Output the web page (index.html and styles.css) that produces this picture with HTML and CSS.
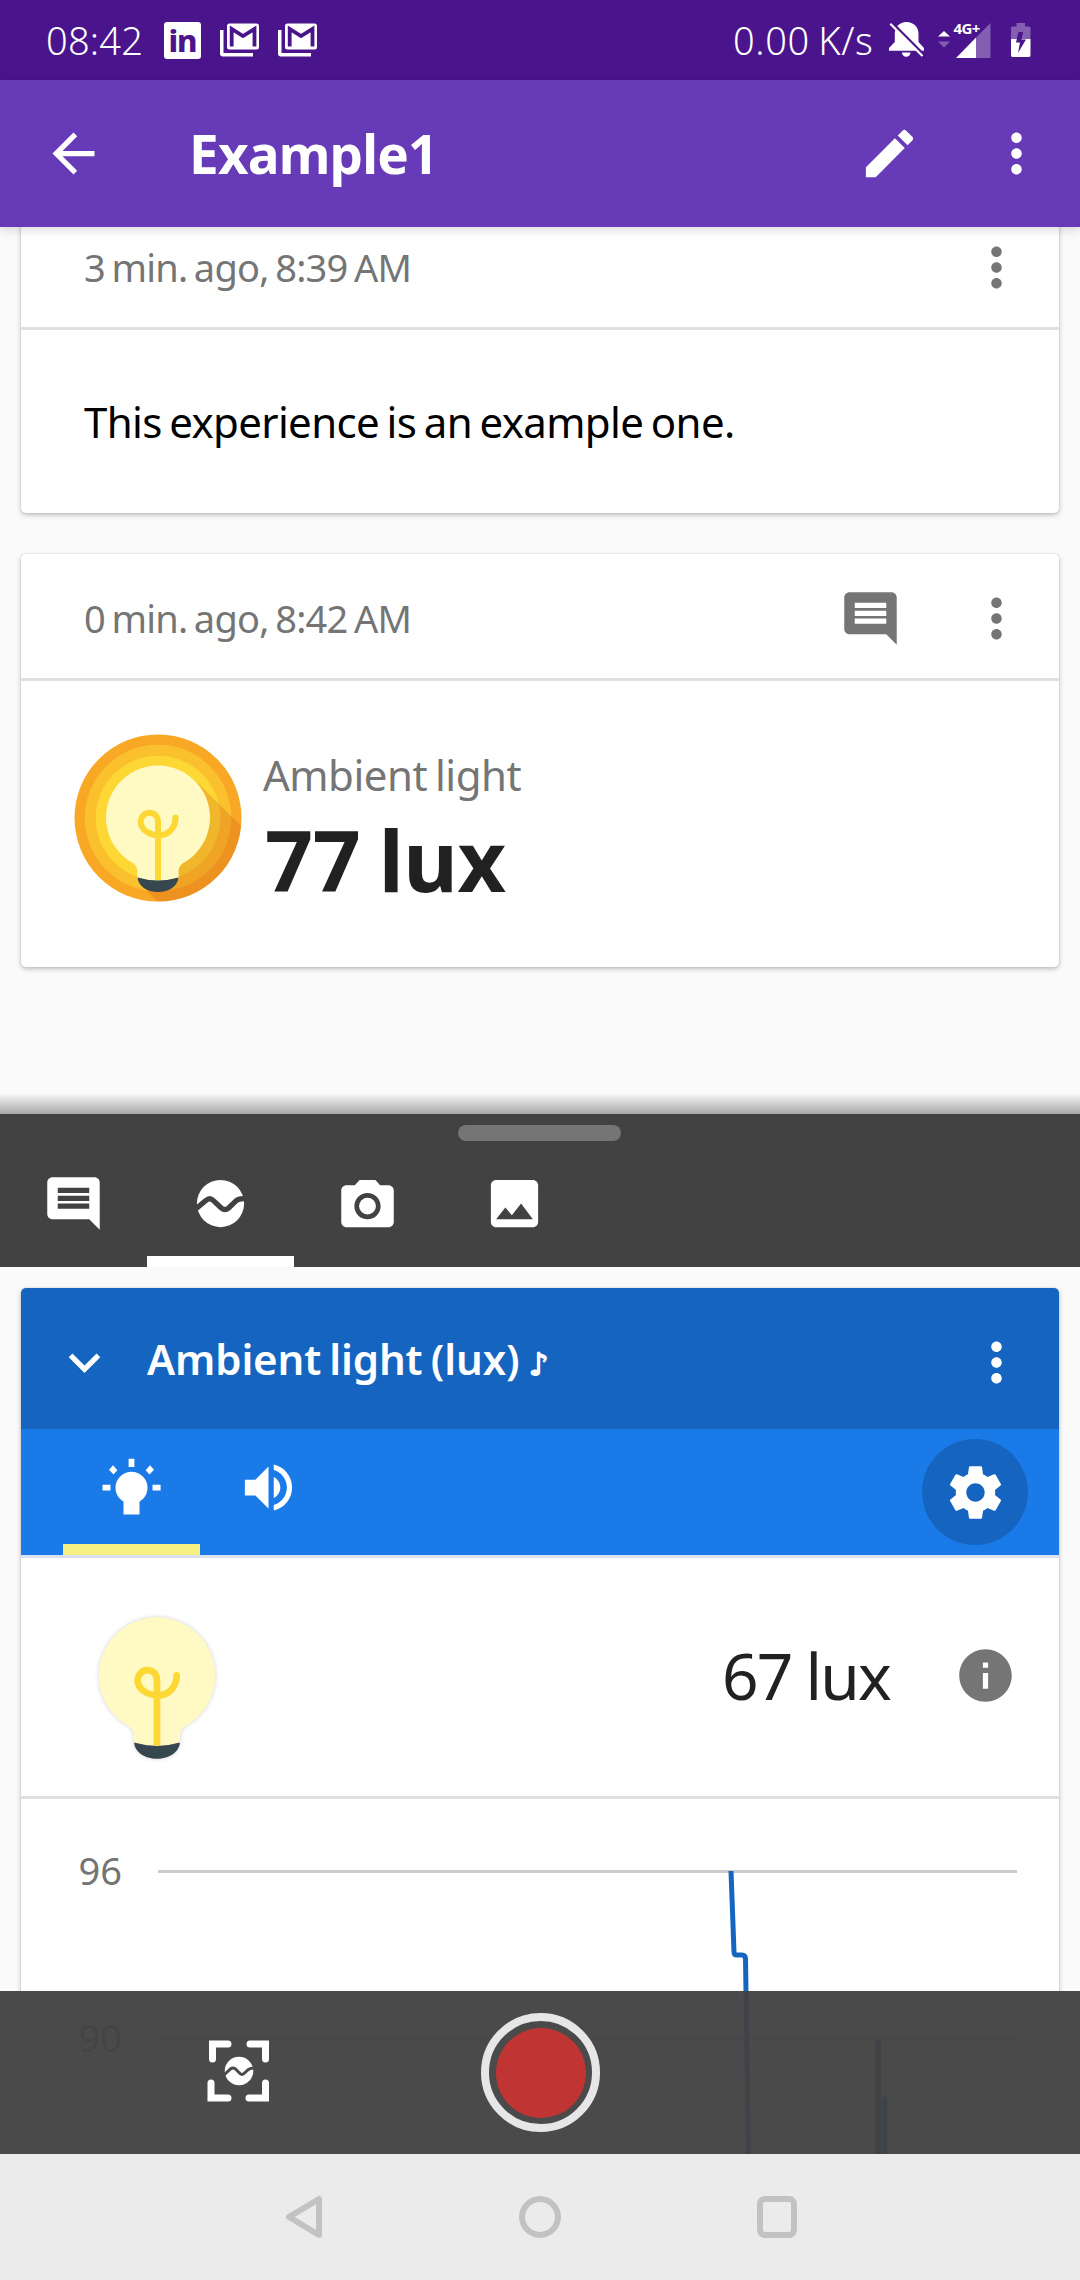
FILE: index.html
```html
<!DOCTYPE html>
<html lang="en">
<head>
<meta charset="utf-8">
<title>Example1</title>
<link rel="stylesheet" href="styles.css">
</head>
<body>
<svg class="defs" width="0" height="0" aria-hidden="true">
  <defs>
    <symbol id="more" viewBox="0 0 24 24"><path d="M12 8c1.1 0 2-.9 2-2s-.9-2-2-2-2 .9-2 2 .9 2 2 2zm0 2c-1.1 0-2 .9-2 2s.9 2 2 2 2-.9 2-2-.9-2-2-2zm0 6c-1.1 0-2 .9-2 2s.9 2 2 2 2-.9 2-2-.9-2-2-2z"/></symbol>
    <symbol id="comment" viewBox="0 0 24 24"><path d="M21.99 4c0-1.1-.89-2-1.99-2H4c-1.1 0-2 .9-2 2v12c0 1.1.9 2 2 2h14l4 4-.01-18zM18 14H6v-2h12v2zm0-3H6V9h12v2zm0-3H6V6h12v2z"/></symbol>
    <symbol id="mail-stack" viewBox="0 0 39 34">
      <path d="M9.500 .5H36.500Q39 .5 39 3V24Q39 26.500 36.500 26.500H9.500Q7 26.500 7 24V3Q7 .5 9.500 .5zM0 7H3.500V30H33V33.500H3Q0 33.500 0 30.500z"/>
      <path class="cut" d="M11.700 23.500V6L23 13L34.500 6V23.500"/>
    </symbol>
    <symbol id="bulb" viewBox="-84 -84 168 168">
      <path class="glass" d="M-20.600 60V54C-20.600 49 -23 46 -27 44A52 52 0 1 1 27 44C23 46 20.600 49 20.600 54V60Q0 66 -20.600 60z"/>
      <path class="filament" d="M0 62V4C0 -2 -4 -5.300 -8.700 -5.300C-13.500 -5.300 -17.300 -1 -17.300 4C-17.300 11 -9 17.300 1 17.300C11 17.300 17.500 9 17.500 0"/>
      <path class="filament-end" d="M17.500 0V-.5"/>
      <path class="base" d="M-20.400 59.500Q0 65.500 20.400 59.500C20 68 11 74 0 74C-11 74 -20 68 -20.400 59.500z"/>
    </symbol>
  </defs>
</svg>

<div class="screen">
  <header class="status">
    <span class="clock">08:42</span>
    <span class="linkedin">in</span>
    <svg class="mail"><use href="#mail-stack"/></svg>
    <svg class="mail"><use href="#mail-stack"/></svg>
    <span class="speed">0.00 K/s</span>
    <svg class="bell" viewBox="0 0 35 36">
      <path d="M17.500 0C10.500 0 5.800 5 5.800 11.500V20L0 26V28.700H35V26L29.500 20V11.500C29.500 5 24.500 0 17.500 0zM13 30.500H21.500A4.200 4.200 0 0 1 13 30.500z"/>
      <path class="slash-gap" d="M0 -2L37 35"/>
      <path class="slash" d="M1.300 1.800L33.500 34"/>
    </svg>
    <svg class="signal" viewBox="0 -8 53 52">
      <path d="M0 14.500L6 9L12 14.500z"/><path class="faint" d="M0 19.500L6 25.500L12 19.500z"/>
      <path class="faint" d="M38 15.500L52.500 1V36H38z"/><path d="M38 15.500V36H18z"/>
      <text x="15.500" y="12">4G+</text>
    </svg>
    <svg class="battery" viewBox="0 0 20 34">
      <path class="faint" d="M5.500 0H14V3.500H18Q19.500 3.500 19.500 5V16H0V5Q0 3.500 1.500 3.500H5.500z"/>
      <path d="M0 16H19.500V32Q19.500 34 18 34H1.500Q0 34 0 32z"/>
      <path class="bolt" d="M12 9H7.500L5 19.500H9L7 30L15 16.500H10.500z"/>
    </svg>
  </header>

  <nav class="appbar">
    <svg class="icon" viewBox="0 0 24 24"><path d="M20 11H7.830l5.590-5.590L12 4l-8 8 8 8 1.410-1.410L7.830 13H20v-2z"/></svg>
    <h1>Example1</h1>
    <svg class="icon" viewBox="0 0 24 24"><path d="M3 17.250V21h3.750L17.810 9.940l-3.750-3.750L3 17.250zM20.710 7.040c.39-.39.39-1.020 0-1.410l-2.340-2.340c-.39-.39-1.020-.39-1.410 0l-1.830 1.830 3.750 3.750 1.830-1.830z"/></svg>
    <svg class="icon menu"><use href="#more"/></svg>
  </nav>

  <main class="notes">
    <article class="card">
      <div class="card-head"><time>3 min. ago, 8:39 AM</time><svg class="icon"><use href="#more"/></svg></div>
      <p class="note-text">This experience is an example one.</p>
    </article>
    <article class="card">
      <div class="card-head"><time>0 min. ago, 8:42 AM</time><svg class="icon"><use href="#comment"/></svg><svg class="icon"><use href="#more"/></svg></div>
      <div class="snapshot">
        <svg class="badge" viewBox="-84 -84 168 168">
          <clipPath id="disc"><circle r="83.500"/></clipPath>
          <circle class="ring-outer" r="83.500"/><circle class="ring-mid" r="73.300"/><circle class="ring-inner" r="62.300"/>
          <path class="cast" clip-path="url(#disc)" d="M39 -36L90 15V90H6L-11 73L20 40z"/>
          <use href="#bulb" x="-84" y="-84" width="168" height="168"/>
        </svg>
        <div class="reading"><span class="label">Ambient light</span><strong>77 lux</strong></div>
      </div>
    </article>
  </main>

  <section class="panel">
    <div class="handle"></div>
    <div class="tabs">
      <div class="tab"><svg class="icon"><use href="#comment"/></svg></div>
      <div class="tab active"><svg class="icon" viewBox="0 0 24 24"><circle cx="12" cy="12" r="9"/><path class="wave" d="M2 14.600L6.400 10.900Q7.900 9.500 9.300 10.900L12.300 13.700Q13.700 14.900 15.100 13.700L17.800 11.100Q18.900 10 21.600 10.200"/></svg></div>
      <div class="tab"><svg class="icon" viewBox="0 -1 24 24"><circle cx="12" cy="12" r="3.200"/><path d="M9 2L7.170 4H4c-1.100 0-2 .9-2 2v12c0 1.100.9 2 2 2h16c1.100 0 2-.9 2-2V6c0-1.100-.9-2-2-2h-3.170L15 2H9zm3 15c-2.760 0-5-2.240-5-5s2.240-5 5-5 5 2.240 5 5-2.240 5-5 5z"/></svg></div>
      <div class="tab"><svg class="icon" viewBox="0 0 24 24"><path d="M21 19V5c0-1.100-.9-2-2-2H5c-1.100 0-2 .9-2 2v14c0 1.100.9 2 2 2h14c1.100 0 2-.9 2-2zM8.500 13.500l2.500 3.010L14.500 12l4.500 6H5l3.500-4.500z"/></svg></div>
    </div>
  </section>

  <section class="sensors">
    <article class="card sensor">
      <div class="sensor-head">
        <svg class="icon" viewBox="0 0 24 24"><path d="M16.590 8.590L12 13.170 7.410 8.590 6 10l6 6 6-6z"/></svg>
        <h2>Ambient light (lux) <span class="tone">♪</span></h2>
        <svg class="icon"><use href="#more"/></svg>
      </div>
      <div class="sensor-tabs">
        <div class="stab active">
          <svg class="icon" viewBox="0 0 63 63"><circle cx="31.500" cy="31.800" r="16"/><path d="M23.500 42H39.500V58.500H23.500zM28.600 2.800H34.400V11H28.600zM2.500 28.800H10.500V34.600H2.500zM52.500 28.800H60.600V34.600H52.500zM9 13.700L13 9.300L17.400 14.200L13.500 18.400zM54 13.700L50 9.300L45.600 14.200L49.500 18.400z"/></svg>
        </div>
        <div class="stab">
          <svg class="icon" viewBox="0 0 24 24"><path d="M3 9v6h4l5 5V4L7 9H3zm13.500 3c0-1.770-1.020-3.290-2.500-4.030v8.050c1.480-.73 2.500-2.250 2.500-4.020zM14 3.230v2.060c2.890.86 5 3.540 5 6.710s-2.110 5.850-5 6.710v2.060c4.010-.91 7-4.490 7-8.770s-2.990-7.860-7-8.770z"/></svg>
        </div>
        <div class="gear">
          <svg class="icon" viewBox="0 0 24 24"><path d="M19.430 12.980c.04-.32.07-.64.07-.98s-.03-.66-.07-.98l2.110-1.650c.19-.15.24-.42.12-.64l-2-3.460c-.12-.22-.39-.3-.61-.22l-2.490 1c-.52-.4-1.080-.73-1.690-.98l-.38-2.650C14.460 2.180 14.250 2 14 2h-4c-.25 0-.46.18-.49.42l-.38 2.650c-.61.25-1.170.59-1.690.98l-2.490-1c-.23-.09-.49 0-.61.22l-2 3.460c-.13.22-.07.49.12.64l2.110 1.650c-.04.32-.07.65-.07.98s.03.66.07.98l-2.110 1.650c-.19.15-.24.42-.12.64l2 3.460c.12.22.39.3.61.22l2.490-1c.52.4 1.080.73 1.690.98l.38 2.650c.03.24.24.42.49.42h4c.25 0 .46-.18.49-.42l.38-2.650c.61-.25 1.170-.59 1.690-.98l2.490 1c.23.09.49 0 .61-.22l2-3.460c.12-.22.07-.49-.12-.64l-2.110-1.650zM12 15.500c-1.930 0-3.500-1.570-3.500-3.500s1.570-3.500 3.500-3.500 3.500 1.570 3.500 3.500-1.570 3.500-3.500 3.500z"/></svg>
        </div>
      </div>
      <div class="live">
        <svg class="live-bulb"><use href="#bulb"/></svg>
        <span class="value">67 lux</span>
        <svg class="icon info" viewBox="0 0 24 24"><path d="M12 2C6.480 2 2 6.480 2 12s4.480 10 10 10 10-4.480 10-10S17.520 2 12 2zm1 15h-2v-6h2v6zm0-8h-2V7h2v2z"/></svg>
      </div>
      <svg class="chart" viewBox="0 0 1038 355">
        <path class="grid" d="M137 72.500H996M137 240H996"/>
        <text x="57.500" y="86">96</text><text x="57.500" y="253">90</text>
        <path class="line" d="M710 72L713 153Q713 156 716 156H721Q724.500 156 724.500 160L727.500 360"/>
        <path class="line peak" d="M857 360V244M863.500 360V300"/>
      </svg>
    </article>
    <div class="recorder">
      <svg class="snap" viewBox="0 0 64 63">
        <path class="corner" d="M5.500 19V4H21M43 4H58.500V19M4 43V58H21M42 58H58.500V43"/>
        <circle cx="32" cy="31" r="14.300"/>
        <path class="thin-wave" d="M17 35L23.500 29Q26 27 28.500 29L33 33.500Q35 35.500 37 33.500L41.500 29.500Q43.500 28 47.500 28"/>
      </svg>
      <div class="record"></div>
    </div>
  </section>

  <footer class="navbar">
    <svg viewBox="0 0 42 44"><path d="M37 4V40L7 22z"/></svg>
    <svg viewBox="0 0 42 44"><circle cx="21" cy="22" r="18"/></svg>
    <svg viewBox="0 0 42 44"><rect x="4" y="4" width="34" height="36" rx="5"/></svg>
  </footer>
</div>
</body>
</html>
```
FILE: styles.css
```css
* { box-sizing: border-box; }
body { margin: 0; font-family: "Noto Sans", "Open Sans", sans-serif; background: #fafafa; }
h1, h2, p { margin: 0; }
svg { display: block; flex: none; }
.defs { position: absolute; }
.screen { width: 1080px; height: 2280px; display: flex; flex-direction: column; overflow: hidden; background: #fafafa; }
.icon { width: 63px; height: 63px; fill: currentColor; }

/* status bar */
.status { flex: none; height: 80px; display: flex; align-items: center; padding: 0 49px 0 46px; background: #4a148c; color: #fff; fill: #fff; font-size: 38px; line-height: 78px; font-weight: 350; }
.clock { width: 118px; letter-spacing: .2px; padding-bottom: 1px; }
.linkedin { width: 37px; height: 37px; margin-right: 19px; border-radius: 3px; background: #fff; color: #4a148c; font-size: 31px; font-weight: 800; line-height: 36px; text-align: center; letter-spacing: -1px; }
.mail { width: 39px; height: 34px; margin-right: 19px; }
.cut { fill: none; stroke: #4a148c; stroke-width: 3.800; }
.speed { margin-left: auto; width: 157px; letter-spacing: .6px; word-spacing: -2px; white-space: nowrap; padding: 0 0 1px 1px; }
.bell { width: 35px; height: 36px; margin-right: 14px; }
.slash-gap { stroke: #4a148c; stroke-width: 3; }
.slash { stroke: #fff; stroke-width: 2.200; }
.signal { width: 53px; height: 52px; margin-right: 20px; }
.signal text { font-size: 15px; font-weight: 700; letter-spacing: -.6px; }
.battery { width: 20px; height: 34px; }
.faint { opacity: .32; }
.bolt { fill: #4a148c; }

/* app bar */
.appbar { flex: none; height: 147px; display: flex; align-items: center; padding: 0 32px 0 42px; background: #673ab7; color: #fff; position: relative; z-index: 1; box-shadow: 0 3px 10px rgba(0, 0, 0, .15); }
.appbar h1 { flex: 1; padding: 1px 0 0 84px; font-size: 53px; line-height: 80px; font-weight: 700; letter-spacing: -.8px; }
.appbar .menu { margin-left: 64px; }

/* note cards */
.notes { flex: none; height: 887px; padding: 0 21px; overflow: hidden; display: flex; flex-direction: column; gap: 41px; }
.card { flex: none; background: #fff; border-radius: 5px; box-shadow: 0 2px 5px rgba(0, 0, 0, .24), 0 0 2px rgba(0, 0, 0, .12); }
.notes .card:first-child { margin-top: -24px; }
.card-head { height: 127px; display: flex; align-items: center; gap: 63px; padding: 4px 31px 0 63px; border-bottom: 3px solid #e0e0e0; color: #757575; }
.card-head time { flex: 1; font-size: 38px; line-height: 60px; letter-spacing: -.75px; word-spacing: -2.700px; padding-bottom: 1px; }
.note-text { height: 183px; padding-left: 63px; font-size: 42px; line-height: 184px; color: #000; letter-spacing: -.65px; word-spacing: -2.700px; }
.snapshot { height: 286px; display: flex; align-items: flex-start; padding: 53px 0 0 53px; }
.badge { width: 168px; height: 168px; }
.ring-outer { fill: #f9a825; }
.ring-mid { fill: #fbc02d; }
.ring-inner { fill: #fdd835; }
.cast { fill: rgb(202, 80, 20); fill-opacity: .25; }
.glass { fill: #fff9c4; }
.filament { fill: none; stroke: #fdd835; stroke-width: 6; stroke-linecap: butt; }
.filament-end { stroke: #fdd835; stroke-width: 6; stroke-linecap: round; }
.base { fill: #37474f; }
.reading { display: flex; flex-direction: column; padding: 11px 0 0 21px; }
.label { font-size: 42px; line-height: 60px; color: #757575; letter-spacing: -.5px; word-spacing: -2.500px; }
.reading strong { font-size: 84px; line-height: 109px; font-weight: 700; color: #212121; letter-spacing: -.4px; word-spacing: -3px; padding-left: 2px; }

/* tool panel */
.panel { flex: none; height: 153px; background: #424242; color: #fff; position: relative; display: flex; flex-direction: column; align-items: flex-start; }
.panel::before { content: ""; position: absolute; left: 0; right: 0; bottom: 100%; height: 21px; background: linear-gradient(rgba(0, 0, 0, 0), rgba(0, 0, 0, .33)); }
.handle { align-self: center; flex: none; width: 163px; height: 16px; margin: 11px 1px 0 0; border-radius: 8px; background: #757575; }
.tabs { flex: 1; display: flex; }
.tab { width: 147px; display: flex; justify-content: center; align-items: flex-start; padding-top: 31px; border-bottom: 11px solid transparent; }
.tab.active { border-bottom-color: #fff; }
.wave { fill: none; stroke: #424242; stroke-width: 2; }

/* sensor card */
.sensors { flex: none; height: 887px; padding: 21px 21px 0; background: #fafafa; position: relative; overflow: hidden; }
.sensor { overflow: hidden; }
.sensor-head { height: 141px; display: flex; align-items: center; padding: 0 31px 0 32px; background: #1565c0; color: #fff; }
.sensor-head .icon { margin-top: 8px; }
.sensor-head h2 { flex: 1; padding-left: 31px; font-size: 42px; line-height: 60px; font-weight: 600; word-spacing: -2.500px; letter-spacing: -.15px; }
.tone { display: inline-block; font-family: "DejaVu Sans", sans-serif; font-size: 31px; line-height: 40px; -webkit-text-stroke: 1.500px #fff; margin-left: 1px; }
.sensor-tabs { height: 129px; display: flex; align-items: flex-start; padding: 0 31px 0 42px; background: #1a7ae8; color: #fff; border-bottom: 3px solid #d9e2ee; }
.stab { width: 137px; height: 126px; display: flex; justify-content: center; padding-top: 27px; border-bottom: 11px solid transparent; }
.stab.active { border-bottom-color: #f9f084; }
.gear { width: 106px; height: 106px; margin: 10px 0 0 auto; border-radius: 50%; background: #1565c0; display: flex; align-items: center; justify-content: center; }
.live { height: 241px; display: flex; align-items: center; padding: 0 42px; border-bottom: 3px solid #e0e0e0; }
.live-bulb { width: 188px; height: 188px; margin-bottom: 3px; filter: drop-shadow(0 0 2px rgba(0, 0, 0, .18)); }
.value { flex: 1; text-align: right; font-size: 64px; line-height: 90px; color: #212121; letter-spacing: -1.800px; word-spacing: -1px; padding: 0 64px 2px 0; }
.info { color: #757575; margin-bottom: 3px; }
.chart { width: 1038px; height: 355px; font-size: 38px; fill: #757575; }
.grid { stroke: #ccc; stroke-width: 3; }
.line { fill: none; stroke: #1565c0; stroke-width: 5; stroke-linejoin: round; }
.peak { stroke-width: 6; stroke-linecap: round; }

/* recording bar floats above the chart */
.recorder { position: absolute; left: 0; right: 0; bottom: 0; height: 163px; background: rgba(66, 66, 66, .955); display: grid; grid-template-columns: 1fr 119px 1fr; align-items: center; }
.snap { width: 64px; height: 63px; margin-left: 207px; fill: #fff; margin-bottom: 2px; }
.corner { fill: none; stroke: #fff; stroke-width: 7; stroke-linecap: round; }
.thin-wave { fill: none; stroke: #4a4a4a; stroke-width: 3; }
.record { width: 119px; height: 119px; border: 8px solid #e6e6e6; border-radius: 50%; padding: 6.500px; background: #c03433 content-box; }

/* system navigation */
.navbar { flex: none; height: 126px; display: flex; align-items: center; justify-content: center; gap: 195px; background: #ebebeb; }
.navbar svg { width: 42px; height: 44px; fill: none; stroke: #c2c2c2; stroke-width: 6; stroke-linejoin: round; }
```
